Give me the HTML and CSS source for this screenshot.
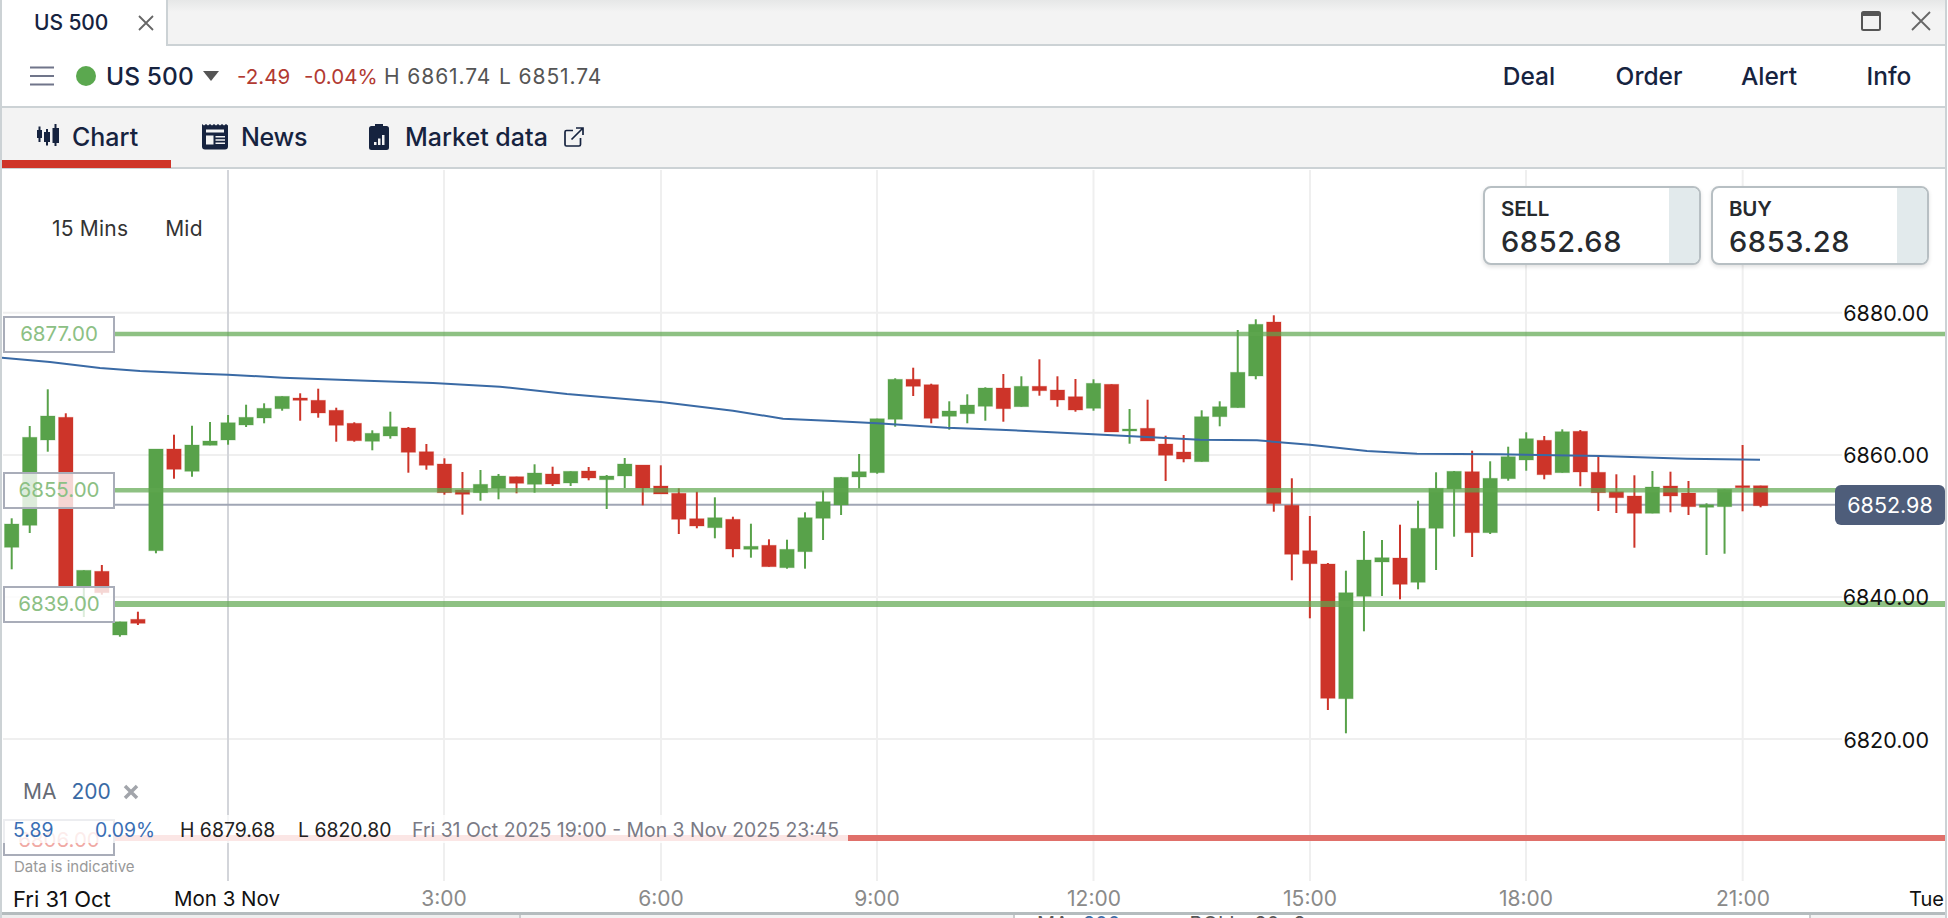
FILE: index.html
```html
<!DOCTYPE html>
<html lang="en">
<head>
<meta charset="utf-8">
<title>US 500</title>
<link rel="stylesheet" href="styles.css">
</head>
<body>
<div class="app">
  <div class="tabstrip">
    <div class="tab"><span class="tab-name">US 500</span>
      <svg class="tab-x" width="16" height="16" viewBox="0 0 16 16"><path d="M1 1L15 15M15 1L1 15"/></svg>
    </div>
    <div class="window-controls">
      <svg class="win-max" width="20" height="20" viewBox="0 0 20 20"><rect x="1" y="1" width="18" height="18" rx="1.5"/><rect class="win-top" x="1" y="1" width="18" height="4"/></svg>
      <svg class="win-close" width="20" height="20" viewBox="0 0 20 20"><path d="M1 1L19 19M19 1L1 19"/></svg>
    </div>
  </div>

  <div class="toolbar">
    <svg class="burger" width="24" height="20" viewBox="0 0 24 20"><path d="M0 1.5H24M0 10H24M0 18.5H24"/></svg>
    <span class="dot"></span>
    <span class="market">US 500</span>
    <span class="caret"></span>
    <span class="chg">-2.49</span>
    <span class="chg pct">-0.04%</span>
    <span class="hl">H 6861.74</span>
    <span class="hl low">L 6851.74</span>
    <div class="actions">
      <span>Deal</span><span>Order</span><span>Alert</span><span>Info</span>
    </div>
  </div>

  <div class="navtabs">
    <div class="navtab active">
      <svg width="22" height="22" viewBox="0 0 22 22"><path d="M1.500 2.500H3.500V6H5V14H3.500V18H1.500V14H0V6H1.500ZM9 5H11V8H13V18H11V21.500H9V18H7V8H9ZM17.500 0H19.500V4H22V19H19.500V22H17.500V19H15.500V4H17.500Z"/></svg>
      <span>Chart</span>
    </div>
    <div class="navtab news">
      <svg width="26" height="26" viewBox="0 0 26 26"><path fill-rule="evenodd" d="M0 0L2 1.500 4 0 6 1.500 8 0 10 1.500 12 0 14 1.500 16 0 18 1.500 20 0 22 1.500 24 0 26 1.500V22.500A3 3 0 0 1 23 25.500H3A3 3 0 0 1 0 22.500ZM4 5.500V8.500H22V5.500ZM4 11.500V20.500H11.500V11.500ZM13.500 12V13.500H23V12ZM13.500 15.300V16.800H23V15.300ZM13.500 18.600V20.100H23V18.600Z"/></svg>
      <span>News</span>
    </div>
    <div class="navtab mkt">
      <svg width="20" height="26" viewBox="0 0 20 26"><path fill-rule="evenodd" d="M6 0H14V2H17.500A2.500 2.500 0 0 1 20 4.500V23.500A2.500 2.500 0 0 1 17.500 26H2.500A2.500 2.500 0 0 1 0 23.500V4.500A2.500 2.500 0 0 1 2.500 2H6ZM5 18V21H7.500V18ZM9 14.500V21H11.500V14.500ZM13 11V21H15.500V11Z"/></svg>
      <span>Market data</span>
      <svg class="ext" width="20" height="20" viewBox="0 0 20 20"><path d="M9 3.500H2.500A1.500 1.500 0 0 0 1 5V17.500A1.500 1.500 0 0 0 2.500 19H15A1.500 1.500 0 0 0 16.500 17.500V11M7.500 12.500L18.500 1.500M12 1H19V8"/></svg>
    </div>
  </div>

  <div class="chart" id="chart">
    <svg class="plot" id="plot" width="1944" height="743" viewBox="2 169 1944 743"></svg>

    <div class="period"><span>15 Mins</span><span>Mid</span></div>

    <div class="quotes">
      <div class="quote"><div class="quote-body"><span class="side">SELL</span><span class="price">6852.68</span></div><div class="quote-shade"></div></div>
      <div class="quote"><div class="quote-body"><span class="side">BUY</span><span class="price">6853.28</span></div><div class="quote-shade"></div></div>
    </div>

    <div class="level l77">6877.00</div>
    <div class="level l55">6855.00</div>
    <div class="level l39">6839.00</div>

    <div class="yl y80">6880.00</div>
    <div class="yl y60">6860.00</div>
    <div class="yl y40">6840.00</div>
    <div class="yl y20">6820.00</div>
    <div class="cur">6852.98</div>

    <div class="ma"><span>MA</span><b>200</b><svg width="16" height="16" viewBox="0 0 16 16"><path d="M2 2L14 14M14 2L2 14"/></svg></div>

    <div class="level red">6806.00</div>
    <div class="stats">
      <span class="st-a">5.89</span><span class="st-b">0.09%</span>
      <span class="st-h">H 6879.68</span><span class="st-l">L 6820.80</span>
      <span class="st-r">Fri 31 Oct 2025 19:00 - Mon 3 Nov 2025 23:45</span>
    </div>
    <div class="indicative">Data is indicative</div>

    <div class="xl dark x-fri">Fri 31 Oct</div>
    <div class="xl dark x-mon">Mon 3 Nov</div>
    <div class="xl t1">3:00</div>
    <div class="xl t2">6:00</div>
    <div class="xl t3">9:00</div>
    <div class="xl t4">12:00</div>
    <div class="xl t5">15:00</div>
    <div class="xl t6">18:00</div>
    <div class="xl t7">21:00</div>
    <div class="xl dark x-tue">Tue</div>
  </div>

  <div class="under">
    <div class="under-a"></div>
    <div class="under-b"></div>
    <div class="under-c"><span>MA</span><b>200</b><i>×</i><span class="gap">BOLL</span><span>20</span><span>2</span><i>×</i></div>
    <div class="under-d"></div>
  </div>
</div>
<script src="chart.js"></script>
</body>
</html>
```
FILE: styles.css
```css
* { box-sizing: border-box; }
html, body { margin: 0; padding: 0; }
body {
  width: 1948px; height: 918px; overflow: hidden; background: #fff;
  font-family: Inter, "Liberation Sans", sans-serif; color: #16233f;
}
.app { width: 1947px; height: 918px; border-left: 2px solid #ccd2d5; border-right: 2px solid #ccd2d5; display: flex; flex-direction: column; }

.tabstrip {
  height: 46px; flex: none; display: flex; justify-content: space-between;
  background: linear-gradient(#e6e7e7, #f3f3f3 12px);
  border-bottom: 2px solid #ccd2d5;
}
.tab {
  width: 166px; height: 46px; background: #fff; border-right: 2px solid #ccd2d5;
  display: flex; align-items: center; padding: 0 0 0 32px;
}
.tab-name { font-size: 21px; font-weight: 500; letter-spacing: -.1px; width: 104px; flex: none; line-height: 46px; }
.tab-x path { stroke: #666; stroke-width: 1.8; fill: none; }
.window-controls { display: flex; gap: 30px; padding: 11px 14px 0 0; align-items: flex-start; }
.win-max rect { fill: none; stroke: #555; stroke-width: 2; }
.win-max .win-top { fill: #555; stroke: none; }
.win-close path { stroke: #666; stroke-width: 1.8; fill: none; }

.toolbar { height: 62px; flex: none; display: flex; align-items: center; border-bottom: 2px solid #ccd2d5; padding-left: 28px; background: #fff; }
.burger path { stroke: #70758a; stroke-width: 2; fill: none; }
.dot { width: 20px; height: 20px; border-radius: 50%; background: #5ba84f; margin-left: 22px; flex: none; }
.market { font-size: 24.5px; font-weight: 500; margin-left: 10px; width: 97px; flex: none; letter-spacing: .1px; }
.caret { width: 0; height: 0; border-left: 8px solid transparent; border-right: 8px solid transparent; border-top: 10px solid #555; flex: none; }
.chg { font-size: 20.5px; color: #b23a32; margin-left: 18px; width: 67px; flex: none; }
.chg.pct { margin-left: 0; width: 80px; }
.hl { font-size: 21px; letter-spacing: .9px; color: #555; width: 115px; flex: none; }
.hl.low { width: 110px; }
.actions { margin-left: auto; display: flex; gap: 20px; padding-right: 6px; }
.actions span { width: 100px; text-align: center; font-size: 24.5px; font-weight: 500; }

.navtabs { height: 61px; flex: none; background: #f3f3f3; border-bottom: 2px solid #ccd2d5; display: flex; position: relative; }
.navtab { display: flex; align-items: center; height: 59px; font-size: 25px; font-weight: 500; position: relative; padding-bottom: 2px; }
.navtab svg { fill: #16233f; flex: none; }
.navtab.active { width: 169px; padding: 6px 0 0 35px; gap: 13px; border-bottom: 8px solid #cf3529; height: 60px; }
.navtab.active svg { margin-top: -4px; }
.navtab.news { margin-left: 31px; gap: 13px; width: 167px; letter-spacing: -.3px; }
.navtab.mkt { gap: 16px; }
.navtab .ext { fill: none; stroke: #16233f; stroke-width: 1.7; }

.chart { position: relative; flex: none; height: 743px; overflow: hidden; background: #fff; }
.plot { display: block; position: absolute; left: 0; top: 0; }

.period { position: absolute; left: 50px; top: 49px; display: flex; gap: 37px; font-size: 21px; letter-spacing: .2px; line-height: 22px; color: #333; }
.quotes { position: absolute; left: 1481px; top: 17px; display: flex; gap: 10px; }
.quote { width: 218px; height: 79px; border: 2px solid #b7bfc3; border-radius: 8px; display: flex; overflow: hidden; background: #fff; box-shadow: 0 2px 4px rgba(0,0,0,.12); }
.quote-body { width: 184px; padding: 9px 0 0 16px; display: flex; flex-direction: column; color: #262a2e; }
.quote-shade { flex: 1; background: #e2eaec; }
.side { font-size: 20.5px; font-weight: 600; line-height: 24px; letter-spacing: -.2px; }
.price { font-size: 29px; font-weight: 500; line-height: 41px; letter-spacing: .6px; }

.level { position: absolute; left: 1px; width: 112px; height: 37px; border: 2px solid #a9adb9; background: rgba(255,255,255,.8); color: #8cc084; font-size: 20.5px; line-height: 32px; text-align: center; }
.l77 { top: 147px; }
.l55 { top: 303px; }
.l39 { top: 417px; }
.level.red { top: 650px; color: #f0a9a4; line-height: 38px; }

.yl { position: absolute; right: 16px; font-size: 21.5px; line-height: 26px; color: #111; }
.y80 { top: 131px; }
.y60 { top: 273px; }
.y40 { top: 415px; }
.y20 { top: 558px; }
.cur { position: absolute; left: 1833px; top: 316px; width: 110px; height: 40px; border-radius: 6px; background: #4e5d7a; color: #fff; font-size: 21.5px; line-height: 40px; text-align: center; }

.ma { position: absolute; left: 21px; top: 610px; display: flex; align-items: center; font-size: 21px; line-height: 26px; color: #666b75; }
.ma b { font-weight: 400; color: #3a6aa5; margin-left: 15px; }
.ma svg { margin-left: 12px; }
.ma path { stroke: #a2a5ab; stroke-width: 3.5; fill: none; }

.stats { position: absolute; left: 0; top: 646px; width: 846px; height: 28px; background: rgba(255,255,255,.78); font-size: 19.4px; line-height: 31px; color: #222; display: flex; }
.st-a, .st-b { color: #3a6fb5; }
.st-a { margin-left: 11px; width: 82px; }
.st-b { width: 85px; }
.st-h { width: 118px; }
.st-l { width: 114px; }
.st-r { color: #7a7a85; white-space: nowrap; }
.indicative { position: absolute; left: 12px; top: 688px; font-size: 15px; line-height: 20px; color: #999; }

.xl { position: absolute; top: 717px; font-size: 21px; line-height: 26px; color: #8a8a8a; transform: translateX(-50%); }
.xl.dark { color: #111; transform: none; }
.x-fri { left: 11px; font-size: 22px; }
.x-mon { left: 172px; font-size: 20.5px; }
.x-tue { left: 1907px; font-size: 20px; }
.t1 { left: 442px; }
.t2 { left: 659px; }
.t3 { left: 875px; }
.t4 { left: 1092px; }
.t5 { left: 1308px; }
.t6 { left: 1524px; }
.t7 { left: 1741px; }

.under { flex: none; height: 6px; border-top: 3px solid #b5bcbe; display: flex; overflow: hidden; background: #f4f4f4; }
.under-a { width: 519px; border-right: 2px solid #c9cccd; background: #eeeeee; }
.under-b { width: 494px; border-right: 2px solid #c9cccd; }
.under-c { width: 794px; background: #fff; font-size: 20px; line-height: 20px; color: #555; display: flex; gap: 14px; padding-left: 22px; margin-top: -1px; height: 24px; }
.under-c b { font-weight: 400; color: #3a6aa5; }
.under-c i { font-style: normal; color: #a2a5ab; }
.under-c .gap { margin-left: 28px; }
.under-d { flex: 1; border-left: 2px solid #c9cccd; }

svg .grid { stroke: #efefef; stroke-width: 2; }
svg .grid-day { stroke: #d3d5da; stroke-width: 2; }
svg .price-line { stroke: #a0a6b5; stroke-width: 2; }
svg .ma-line { fill: none; stroke: #3a6aa5; stroke-width: 2; stroke-linejoin: round; }
svg .lvl { stroke: rgba(94,166,79,.7); }
svg .red-lvl { stroke: #e0706a; stroke-width: 6; }
svg .red-lvl-faint { stroke: #ee8f89; stroke-width: 6; }
svg .up { fill: #58a24a; stroke: rgba(88,162,74,.3); }
svg .dn { fill: #cd3429; stroke: rgba(205,52,41,.3); }
svg .wick-up { stroke: #58a24a; stroke-width: 2; }
svg .wick-dn { stroke: #cd3429; stroke-width: 2; }
```
FILE: chart.js
```js
var NS = 'http://www.w3.org/2000/svg';
var plot = document.getElementById('plot');
function add(tag, attrs) {
  var el = document.createElementNS(NS, tag);
  for (var k in attrs) el.setAttribute(k, attrs[k]);
  plot.appendChild(el);
  return el;
}
function line(x1, y1, x2, y2, cls, w) {
  var a = { x1: x1, y1: y1, x2: x2, y2: y2, 'class': cls };
  if (w) a['stroke-width'] = w;
  return add('line', a);
}
// horizontal grid
[312.7, 455, 597, 739].forEach(function (y) { line(3, y, 1842, y, 'grid'); });
// vertical grid
[444, 661, 877, 1093.5, 1310, 1526, 1742.7].forEach(function (x) {
  line(x, 170, x, 881, 'grid');
});
line(228, 170, 228, 881, 'grid-day');
// current price line
line(114, 504.7, 1836, 504.7, 'price-line');

// [colour, bodyTop, bodyBottom, wickTop, wickBottom]
var U = 'up', D = 'dn';
var c = [
[U,524,547.3,518.3,569.3],[U,437.3,525.3,426,533],[U,416,440,389.3,451.7],[D,417.3,586,413.3,586.7],
[U,570.3,587,570.3,617],[D,571.3,592.7,565,594.7],[U,621.7,635,621.7,636.7],[D,619.3,623.3,611.7,625],
[U,449,550.7,449,553.3],[D,449,469.3,434.7,478.7],[U,445,471.3,425.7,476.7],[U,441,445.3,422,445.3],
[U,422.7,440,415,444.7],[U,417.3,425,404.7,427],[U,408.3,418,403.3,423.3],[U,396.3,408.7,396.3,410.7],
[D,398,400.3,393.3,420.7],[D,400.3,413,388.7,417.7],[D,410.3,425.3,407.7,441.7],[D,423.3,440.7,422.3,441.7],
[U,433.3,441.3,430.3,450.3],[U,426.7,436,411.7,438.7],[D,428,452.3,427,472.7],[D,451.7,465.3,444,469.7],
[D,464,492.7,458.3,494.7],[D,490,494.3,472,514.7],[U,484.3,492.7,470,500.7],[U,476,488.3,474,499.3],
[D,476.7,483.3,476.7,493.3],[U,473,484.3,464.3,492.7],[D,474,484,466.7,486],[U,471.3,483,471.3,486],
[D,471,478,467,480.3],[U,476,479.7,475,509],[U,464,476,458,488],[D,465,488,465,505.3],
[D,486,494,465.3,494],[D,493.3,519.3,488.3,534],[D,518.7,526,491.7,528.3],[U,517.7,527.7,497.3,538.3],
[D,519.3,549,516.7,557.3],[U,546.3,549.3,523.7,557.7],[D,545.3,566.7,539.3,566.7],[U,549.3,567.7,539.7,568.7],
[U,517.7,551.7,512.3,568.7],[U,501.7,518.3,490.7,540],[U,477.3,505,477.3,515],[U,471.7,477,454,488.3],
[U,418.7,472.7,418.7,473.7],[U,379.3,419.3,378.3,426.7],[D,379.3,386.3,367.7,396],[D,384.7,418.3,383.7,423.3],
[U,411,416.3,401.3,429.7],[U,405,413.7,394.3,423.3],[U,388,406.3,387.3,420.7],[D,388,408.7,374,421.7],
[U,386.3,406.7,376.3,406.7],[D,386.3,390.7,359.3,395.7],[D,390,400,376.3,406.7],[D,396.7,410,379,411.7],
[U,383.3,408.3,379.3,410.7],[D,384.3,432,384.3,432],[U,429,431,409,443.7],[D,428.3,441,399.7,441],
[D,444,455.3,435.7,481],[D,452,459,435,462.3],[U,416.7,461.7,410.3,461.7],[U,406.7,416.7,401.3,426.3],
[U,372.3,407.7,330,407.7],[U,324.3,376,319.3,379.3],[D,322,503.7,315.3,511.7],[D,505.3,554.3,478.3,580.3],
[D,550.7,563.7,516,618.3],[D,564,698.3,563,710],[U,592.7,698.7,570.7,733.3],[U,560,596.3,531,631.3],
[U,557.7,562,540,596],[D,558,584.3,524.7,599.3],[U,528.3,582.3,500.7,589.3],[U,488.3,528.3,472.3,570],
[U,471.3,489,471,536.7],[D,471.7,532.7,450.7,557],[U,478.3,532.7,461.3,534],[U,456.7,478.7,446.7,480.7],
[U,438.7,460,432.3,470.7],[D,440.3,474.7,436,479.3],[U,431.7,472.7,429.3,472.7],[D,431.3,472,430,486.3],
[D,472.3,492.7,456.7,511],[D,491.7,497.7,474.3,513],[D,496,513.3,475.3,547.7],[U,487,513.3,471,513.3],
[D,486,496,471.7,512.3],[D,493,506.7,481,515],[U,504.7,507.3,503.3,555],[U,489.3,506.7,489.3,553.7],
[D,485.7,487.7,445,511.3],[D,485.7,505.7,485.7,507.3]
];
c.forEach(function (k, i) {
  var x = 11.7 + 18.03 * i;
  line(x, k[3], x, k[4], k[0] === U ? 'wick-up' : 'wick-dn');
  add('rect', { x: x - 7.2, y: k[1], width: 14.4, height: Math.max(k[2] - k[1], 1), 'class': k[0] });
});

// 200 period moving average
var ma = [[2,357.7],[50,362],[100,368],[140,371],[200,373.7],[228,374.7],[283,377.7],[367,380.7],[433,383],[500,386.7],
[567,394],[661,402],[733,410.7],[783,418.7],[833,421],[877,423.3],[947,427.7],[1000,429.7],[1093,434.3],[1200,439.7],
[1257,440.3],[1310,444.7],[1367,451],[1417,453.7],[1500,454.2],[1600,456],[1687,458.7],[1760,459.7]];
add('polyline', { points: ma.map(function (p) { return p.join(','); }).join(' '), 'class': 'ma-line' });

// level lines
line(114, 334, 1946, 334, 'lvl', 4.5);
line(114, 490.3, 1836, 490.3, 'lvl', 4.5);
line(114, 604, 1946, 604, 'lvl', 6);
line(114, 838, 848, 838, 'red-lvl-faint');
line(848, 838, 1945, 838, 'red-lvl');
```
